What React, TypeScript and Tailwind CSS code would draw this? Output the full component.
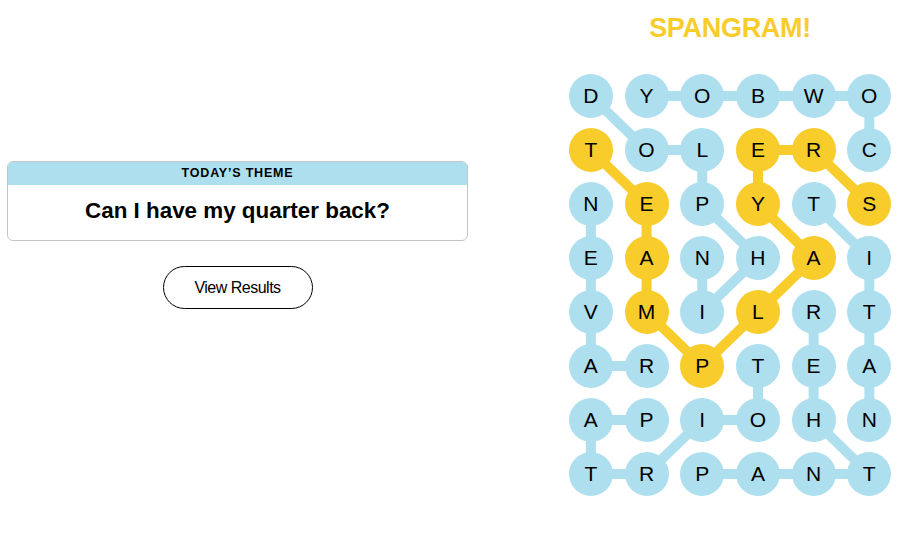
import React from "react";

const ROWS = ["DYOBWO", "TOLERC", "NEPYTS", "EANHAI", "VMILRT", "ARPTEA", "APIOHN", "TRPANT"];

const COL_W = 55.7;
const ROW_H = 54;

type Pt = [number, number];

const blueLinks: [Pt, Pt][] = [
  // cowboy
  [[1, 5], [0, 5]], [[0, 5], [0, 4]], [[0, 4], [0, 3]], [[0, 3], [0, 2]], [[0, 2], [0, 1]],
  // dolphin
  [[0, 0], [1, 1]], [[1, 1], [1, 2]], [[1, 2], [2, 2]], [[2, 2], [3, 3]], [[3, 3], [4, 2]], [[4, 2], [3, 2]],
  // raven
  [[5, 1], [5, 0]], [[5, 0], [4, 0]], [[4, 0], [3, 0]], [[3, 0], [2, 0]],
  // titan
  [[2, 4], [3, 5]], [[3, 5], [4, 5]], [[4, 5], [5, 5]], [[5, 5], [6, 5]],
  // patriot
  [[6, 1], [6, 0]], [[6, 0], [7, 0]], [[7, 0], [7, 1]], [[7, 1], [6, 2]], [[6, 2], [6, 3]], [[6, 3], [5, 3]],
  // panther
  [[7, 2], [7, 3]], [[7, 3], [7, 4]], [[7, 4], [7, 5]], [[7, 5], [6, 4]], [[6, 4], [5, 4]], [[5, 4], [4, 4]],
];

const spangram: Pt[] = [
  [1, 0], [2, 1], [3, 1], [4, 1], [5, 2], [4, 3], [3, 4], [2, 3], [1, 3], [1, 4], [2, 5],
];

const isGold = (r: number, c: number) => spangram.some(([a, b]) => a === r && b === c);

const cx = (c: number) => COL_W / 2 + COL_W * c;
const cy = (r: number) => ROW_H / 2 + ROW_H * r;

function Board() {
  const goldLinks: [Pt, Pt][] = spangram.slice(1).map((p, i) => [spangram[i], p]);
  return (
    <div className="relative">
      <svg className="absolute inset-0" width={COL_W * 6} height={ROW_H * 8}>
        {blueLinks.map(([a, b], i) => (
          <line key={"b" + i} x1={cx(a[1])} y1={cy(a[0])} x2={cx(b[1])} y2={cy(b[0])} stroke="#aedfee" strokeWidth={10} />
        ))}
        {goldLinks.map(([a, b], i) => (
          <line key={"g" + i} x1={cx(a[1])} y1={cy(a[0])} x2={cx(b[1])} y2={cy(b[0])} stroke="#f8cd2b" strokeWidth={10} />
        ))}
      </svg>
      <div className="relative grid grid-cols-[repeat(6,55.7px)] grid-rows-[repeat(8,54px)]">
        {ROWS.map((row, r) =>
          row.split("").map((ch, c) => (
            <div key={r + "-" + c} className="flex items-center justify-center">
              <div
                className={
                  "w-[44px] h-[44px] rounded-full flex items-center justify-center text-[21px] text-black " +
                  (isGold(r, c) ? "bg-[#f8cd2b]" : "bg-[#aedfee]")
                }
              >
                {ch}
              </div>
            </div>
          ))
        )}
      </div>
    </div>
  );
}

export default function App() {
  return (
    <div className="w-[905px] h-[553px] bg-white flex font-['Liberation_Sans',Arial,sans-serif]">
      <div className="w-[475px] pt-[161px] flex flex-col items-center">
        <div className="w-[461px] h-[80px] rounded-[6px] border border-[#c4c4c4] overflow-hidden flex flex-col">
          <div className="h-[23px] bg-[#aedfee] flex items-center justify-center text-[12.5px] font-bold tracking-[0.8px] text-black">
            TODAY’S THEME
          </div>
          <div className="flex-1 flex items-center justify-center text-[22.4px] font-bold text-black pb-[4px]">
            Can I have my quarter back?
          </div>
        </div>
        <button className="mt-[25px] w-[150px] h-[43px] rounded-full border border-black bg-white text-[16px] tracking-[-0.5px] text-black">
          View Results
        </button>
      </div>
      <div className="ml-[88px] flex flex-col items-center">
        <div className="pt-[11px] h-[69px] text-[27px] leading-[34px] font-bold tracking-[-0.3px] text-[#f8cd2b]">
          SPANGRAM!
        </div>
        <Board />
      </div>
    </div>
  );
}
